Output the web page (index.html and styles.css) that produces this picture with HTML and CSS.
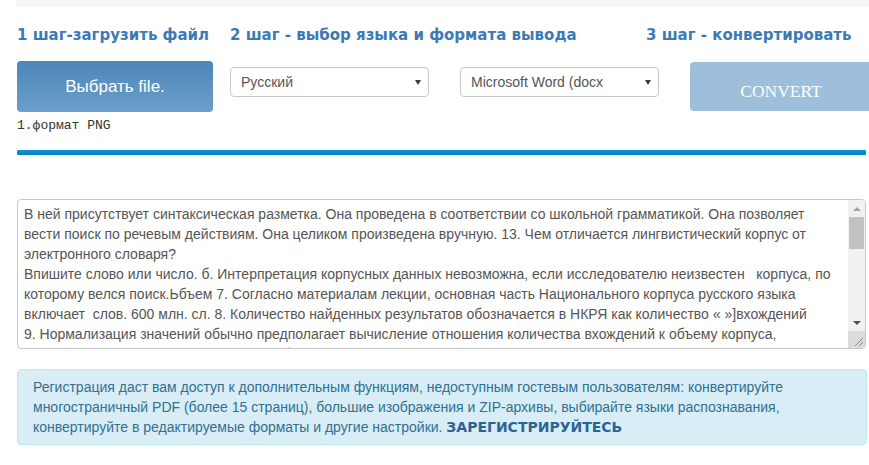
FILE: index.html
```html
<!DOCTYPE html>
<html lang="ru">
<head>
<meta charset="utf-8">
<title>Конвертер</title>
<link rel="stylesheet" href="styles.css">
</head>
<body>
<div class="topbar"></div>
<div class="page">
  <div class="steps">
    <div class="step step-1">1 шаг-загрузить файл</div>
    <div class="step step-2">2 шаг - выбор языка и формата вывода</div>
    <div class="step step-3">3 шаг - конвертировать</div>
  </div>
  <div class="controls">
    <div class="upload-col">
      <button class="btn-upload" type="button">Выбрать file.</button>
      <div class="note">1.формат PNG</div>
    </div>
    <div class="select-wrap">
      <select class="select"><option>Русский</option></select>
    </div>
    <div class="select-wrap">
      <select class="select"><option>Microsoft Word (docx</option></select>
    </div>
    <button class="btn-convert" type="button">CONVERT</button>
  </div>
  <div class="progress"></div>
  <div class="result-wrap">
  <textarea class="result" spellcheck="false">В ней присутствует синтаксическая разметка. Она проведена в соответствии со школьной грамматикой. Она позволяет
вести поиск по речевым действиям. Она целиком произведена вручную. 13. Чем отличается лингвистический корпус от
электронного словаря?
Впишите слово или число. б. Интерпретация корпусных данных невозможна, если исследователю неизвестен   корпуса, по
которому велся поиск.Ьбъем 7. Согласно материалам лекции, основная часть Национального корпуса русского языка
включает  слов. 600 млн. сл. 8. Количество найденных результатов обозначается в НКРЯ как количество « »]вхождений
9. Нормализация значений обычно предполагает вычисление отношения количества вхождений к объему корпуса,
выраженного в миллионах словоупотреблений. 10. Какой подкорпус НКРЯ содержит тексты СМИ?
Газетный корпус. 11. Что такое метатекстовая разметка? Это сведения о тексте в целом:
автор, название, год создания, жанр, тематика. 12. Какие виды разметки существуют в НКРЯ?
Морфологическая, синтаксическая, семантическая, акцентная, метатекстовая.
14. Что такое конкорданс? Список всех употреблений слова в корпусе с контекстом.
15. Что такое лемма? Исходная (словарная) форма слова.
16. Что такое токен? Отдельное словоупотребление в тексте.
17. Что такое частотный словарь? Список слов с указанием частоты их употребления.
18. Какие корпуса входят в состав НКРЯ? Основной, газетный, параллельный, диалектный,
поэтический, устный, акцентологический, мультимедийный и другие.
19. Что такое параллельный корпус? Корпус текстов на одном языке с переводами на другой язык.
20. Что такое снятие омонимии? Выбор одного варианта разбора из нескольких возможных.
21. Каким образом производится поиск по корпусу? По точным формам, по леммам,
по грамматическим признакам и по семантическим признакам.
22. Что такое репрезентативность корпуса? Соответствие корпуса языку в целом.</textarea>
    <div class="scrollbar" aria-hidden="true">
      <div class="sb-btn sb-up"><span class="tri-up"></span></div>
      <div class="sb-track"><div class="sb-thumb"></div></div>
      <div class="sb-btn sb-down"><span class="tri-down"></span></div>
      <div class="sb-corner">
        <svg width="17" height="17" viewBox="0 0 17 17"><path d="M15 7 L7 15 M15 11 L11 15" stroke="#8a8a8a" stroke-width="1" fill="none"/></svg>
      </div>
    </div>
  </div>
  <div class="alert">Регистрация даст вам доступ к дополнительным функциям, недоступным гостевым пользователям: конвертируйте многостраничный PDF (более 15 страниц), большие изображения и ZIP-архивы, выбирайте языки распознавания, конвертируйте в редактируемые форматы и другие настройки. <a class="alert-link" href="#">ЗАРЕГИСТРИРУЙТЕСЬ</a></div>
</div>
</body>
</html>
```

FILE: styles.css
```css
html, body {
  margin: 0;
  padding: 0;
  background: #fff;
  overflow: hidden;
}

body {
  font-family: "Liberation Sans", Arial, sans-serif;
  font-size: 14px;
  color: #333;
}

.topbar {
  height: 7px;
  margin-left: 16px;
  background: #f5f5f5;
}

.page {
  padding: 0 3px 0 17px;
}

.steps {
  display: flex;
  margin-top: 18px;
  height: 20px;
  align-items: center;
}

.step {
  font-family: "DejaVu Sans", Verdana, sans-serif;
  font-weight: bold;
  font-size: 15px;
  line-height: 20px;
  color: #3d7ab5;
  white-space: nowrap;
}

.step-1 { width: 213px; }
.step-2 { width: 416px; }

.controls {
  display: flex;
  align-items: flex-start;
  margin-top: 16px;
  height: 72px;
}

.upload-col {
  width: 196px;
  margin-right: 17px;
}

.btn-upload {
  display: block;
  width: 196px;
  height: 51px;
  border: 0;
  border-radius: 4px;
  background: linear-gradient(to bottom, #4c86b8 0%, #6c9fca 100%);
  color: #fff;
  font-family: "Liberation Sans", Arial, sans-serif;
  font-size: 17px;
  padding: 0;
  margin: 0;
}

.note {
  margin-top: 6px;
  font-family: "Liberation Mono", "Courier New", monospace;
  font-size: 13px;
  line-height: 15px;
  color: #333;
}

.select-wrap {
  position: relative;
  width: 199px;
  margin-top: 6px;
  margin-right: 31px;
}

.select-wrap::after {
  content: "";
  position: absolute;
  right: 8px;
  top: 13px;
  border-left: 3.5px solid transparent;
  border-right: 3.5px solid transparent;
  border-top: 5px solid #3a3a3a;
  pointer-events: none;
}

.select {
  -webkit-appearance: none;
  appearance: none;
  display: block;
  width: 199px;
  height: 30px;
  margin: 0;
  padding: 0 20px 0 10px;
  border: 1px solid #c8c8c8;
  border-radius: 4px;
  background: #fff;
  font-family: "Liberation Sans", Arial, sans-serif;
  font-size: 14px;
  color: #555;
}

.btn-convert {
  width: 182px;
  height: 49px;
  margin-top: 1px;
  flex-shrink: 0;
  border: 0;
  border-radius: 4px;
  background: #9dbfdb;
  color: #fff;
  font-family: "Liberation Serif", "Times New Roman", serif;
  font-size: 17.5px;
  padding: 9px 0 0 0;
}

.progress {
  height: 5px;
  background: linear-gradient(to bottom, #0c93d8 0%, #0a7fc2 100%);
  border-radius: 1px;
  margin-top: 17px;
}

.result-wrap {
  position: relative;
  width: 849px;
  margin-top: 44px;
}

.result {
  display: block;
  box-sizing: border-box;
  width: 849px;
  height: 150px;
  margin: 0;
  padding: 4px 22px 4px 6px;
  border: 1px solid #c8c8c8;
  border-radius: 4px;
  font-family: "Liberation Sans", Arial, sans-serif;
  font-size: 14px;
  line-height: 20px;
  color: #555;
  white-space: pre;
  overflow: hidden;
  resize: none;
}

.scrollbar {
  position: absolute;
  top: 1px;
  right: 1px;
  bottom: 1px;
  width: 17px;
  display: flex;
  flex-direction: column;
  background: #f1f1f1;
  border-radius: 0 3px 3px 0;
  overflow: hidden;
}

.sb-btn {
  height: 17px;
  display: flex;
  align-items: center;
  justify-content: center;
  flex-shrink: 0;
}

.tri-up {
  width: 0;
  height: 0;
  border-left: 4px solid transparent;
  border-right: 4px solid transparent;
  border-bottom: 4px solid #a3a3a3;
}

.tri-down {
  width: 0;
  height: 0;
  border-left: 4px solid transparent;
  border-right: 4px solid transparent;
  border-top: 4px solid #505050;
}

.sb-track {
  flex: 1;
  padding: 0 1px;
}

.sb-thumb {
  height: 32px;
  background: #c1c1c1;
}

.sb-corner {
  height: 17px;
  flex-shrink: 0;
  background: #dcdcdc;
}

.sb-corner svg {
  display: block;
}

.alert {
  box-sizing: border-box;
  width: 850px;
  margin-top: 20px;
  padding: 7px 15px;
  background: #d9edf7;
  border: 1px solid #bce8f1;
  border-radius: 4px;
  color: #31708f;
  font-size: 14px;
  line-height: 20px;
}

.alert-link {
  font-family: "DejaVu Sans", Verdana, sans-serif;
  font-weight: bold;
  font-size: 14px;
  line-height: 18px;
  color: #2b6494;
  text-decoration: none;
}
```
